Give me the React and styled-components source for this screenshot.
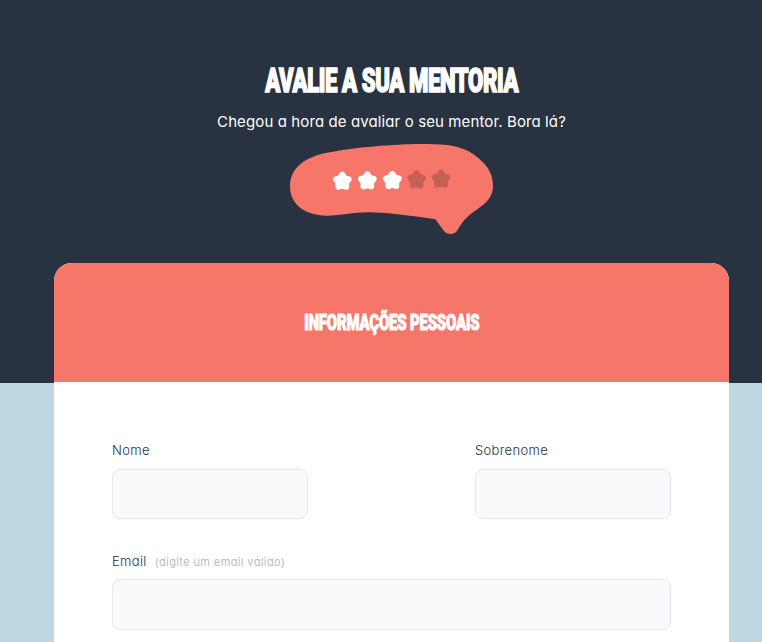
import React from "react";
import styled, { createGlobalStyle } from "styled-components";

const GlobalStyle = createGlobalStyle`
  * { box-sizing: border-box; }
  body {
    margin: 0;
    overflow: hidden;
    background: #bfd6e3;
    font-family: Inter, "Noto Sans", sans-serif;
    font-feature-settings: "cv11" 1;
  }
`;

const Page = styled.main`
  height: 642px;
  overflow: hidden;
  padding: 0 33px 0 54px;
  background: linear-gradient(#293241 383px, #bfd6e3 383px);
`;

const Hero = styled.header`
  height: 263px;
  padding-top: 60.5px;
  display: flex;
  flex-direction: column;
  align-items: center;
`;

const Title = styled.h1`
  margin: 0;
  height: 40px;
  line-height: 40px;
  font-family: Roboto, sans-serif;
  font-size: 33px;
  font-weight: 900;
  letter-spacing: -0.6px;
  -webkit-text-stroke: 1.6px #fff;
  color: #fff;
  white-space: nowrap;
  transform: scaleX(0.67);
`;

const Subtitle = styled.p`
  margin: 9.5px 0 0;
  height: 24px;
  line-height: 24px;
  font-size: 15px;
  letter-spacing: 0.11px;
  color: #fff;
  white-space: nowrap;
`;

const Bubble = styled.svg`
  display: block;
  width: 203px;
  height: 90px;
  margin-top: 10px;
`;

const Card = styled.section`
  height: 420px;
  border-radius: 18px 18px 0 0;
  overflow: hidden;
  background: #fff;
`;

const CardHeader = styled.div`
  height: 119px;
  padding-bottom: 2px;
  display: flex;
  align-items: center;
  justify-content: center;
  background: #f6776a;
`;

const CardTitle = styled.h2`
  margin: 0;
  font-family: Roboto, sans-serif;
  font-size: 22.5px;
  line-height: 30px;
  font-weight: 900;
  letter-spacing: -0.3px;
  -webkit-text-stroke: 1px #fff;
  color: #fff;
  white-space: nowrap;
  transform: scaleX(0.665);
`;

const Form = styled.form`
  padding: 59px 58px 0;
  display: flex;
  flex-direction: column;
  gap: 33px;
`;

const Row = styled.div`
  display: flex;
  justify-content: space-between;
`;

const Field = styled.label`
  display: flex;
  flex-direction: column;
  gap: ${(p) => (p.$wide ? 8 : 9)}px;
  margin-top: -1px;
  width: ${(p) => (p.$wide ? "100%" : "196px")};
`;

const Label = styled.span`
  height: 20px;
  line-height: 20px;
  font-size: 13px;
  font-weight: 300;
  letter-spacing: 0.35px;
  color: #293241;
  white-space: nowrap;
`;

const Hint = styled.small`
  margin-left: 8px;
  font-size: 11px;
  font-weight: 400;
  letter-spacing: 0.38px;
  color: #bbb9c9;
`;

const Input = styled.input`
  width: 100%;
  height: ${(p) => (p.$tall ? 51 : 50)}px;
  border: 1px solid #e6e6f0;
  border-radius: 8px;
  background: #fafafc;
  outline: none;
`;

const starPoints = Array.from({ length: 10 }, (_, i) => {
  const r = i % 2 ? 12 : 20;
  const a = (Math.PI * i) / 5 - Math.PI / 2;
  return `${(r * Math.cos(a)).toFixed(2)},${(r * Math.sin(a)).toFixed(2)}`;
}).join(" ");

const stars = [
  { x: 187, y: 130, on: true },
  { x: 262, y: 129, on: true },
  { x: 337, y: 128, on: true },
  { x: 410, y: 126 },
  { x: 483, y: 124 },
];

export default function App() {
  return (
    <>
      <GlobalStyle />
      <Page>
        <Hero>
          <Title>AVALIE A SUA MENTORIA</Title>
          <Subtitle>Chegou a hora de avaliar o seu mentor. Bora lá?</Subtitle>
          <Bubble viewBox="30 18 609 270" aria-label="3 de 5 estrelas">
            <path
              fill="#f6776a"
              d="M30 145C30 90 75 55 150 43C230 27 380 15 460 19C520 20 560 30 595 60C625 85 639 110 639 145C639 175 620 195 590 215C560 235 548 250 535 272C528 285 520 288 511 288C500 288 494 283 488 274L466 244C420 237 340 225 275 223C220 222 185 233 140 233C75 232 30 200 30 145Z"
            />
            {stars.map((s) => (
              <polygon
                key={s.x}
                points={starPoints}
                transform={`translate(${s.x} ${s.y})`}
                fill={s.on ? "#fff" : "#c66056"}
                stroke={s.on ? "#fff" : "#c66056"}
                strokeWidth="18"
                strokeLinejoin="round"
              />
            ))}
          </Bubble>
        </Hero>
        <Card>
          <CardHeader>
            <CardTitle>INFORMAÇÕES PESSOAIS</CardTitle>
          </CardHeader>
          <Form>
            <Row>
              <Field>
                <Label>Nome</Label>
                <Input type="text" />
              </Field>
              <Field>
                <Label>Sobrenome</Label>
                <Input type="text" />
              </Field>
            </Row>
            <Field $wide>
              <Label>
                Email<Hint>(digite um email válido)</Hint>
              </Label>
              <Input type="email" $tall />
            </Field>
          </Form>
        </Card>
      </Page>
    </>
  );
}
